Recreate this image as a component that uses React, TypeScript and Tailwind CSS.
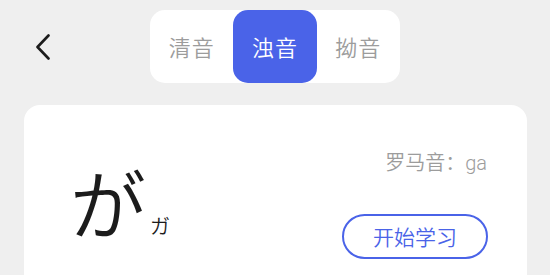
import React from "react";

const cjk = { fontFamily: '"Noto Sans CJK SC", "Noto Sans", sans-serif' };
const jp = { fontFamily: '"Noto Sans CJK JP", "Noto Sans", sans-serif' };

export default function App() {
  const tabs = ["清音", "浊音", "拗音"];
  const active = 1;
  return (
    <div className="w-[550px] h-[275px] bg-[#efefef] overflow-hidden" style={cjk}>
      <div className="grid grid-cols-[1fr_auto_1fr] pt-[10px]">
        <div className="flex items-center pl-[35px]">
          <svg width="16" height="26" viewBox="0 0 16 26" fill="none">
            <path d="M13.5 1.5 L2.5 13 L13.5 24.5" stroke="#1c1c1c" strokeWidth="2.6" strokeLinecap="round" strokeLinejoin="round" />
          </svg>
        </div>
        <div className="flex w-[250px] h-[73px] bg-white rounded-[15px]">
          {tabs.map((t, i) => (
            <div
              key={t}
              className={
                i === active
                  ? "flex-1 flex items-center justify-center rounded-[15px] bg-[#4a63e8] text-white text-[22px] tracking-[1px] font-[350]"
                  : "flex-1 flex items-center justify-center text-[#9c9c9c] text-[22px] tracking-[1px] font-[350]"
              }
            >
              {t}
            </div>
          ))}
        </div>
        <div />
      </div>
      <div className="ml-[24px] mr-[23px] mt-[22px] h-[200px] bg-white rounded-[16px] flex justify-between pl-[46px] pr-[39px]">
        <div className="flex items-end pt-[54px] h-[134px]">
          <span className="text-[76px] leading-none text-[#1c1c1c] font-[350]" style={jp}>が</span>
          <span className="text-[20px] leading-none text-[#1c1c1c] ml-[4px] mb-[3px] font-[350]" style={jp}>ガ</span>
        </div>
        <div className="flex flex-col items-end pt-[43px]">
          <div className="text-[20px] leading-[28px] text-[#9c9c9c] pr-[1px] font-[350]">
            罗马音：<span style={{ fontFamily: "Roboto, sans-serif" }}>ga</span>
          </div>
          <button className="mt-[37px] w-[146px] h-[45px] rounded-full border-2 border-[#4a63e8] text-[#4a63e8] text-[21px] flex items-center justify-center font-[350]">
            开始学习
          </button>
        </div>
      </div>
    </div>
  );
}
